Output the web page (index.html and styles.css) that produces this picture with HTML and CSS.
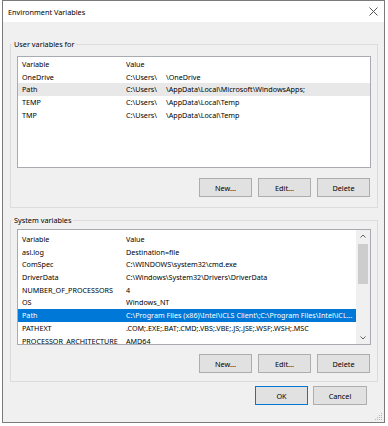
FILE: index.html
```html
<!DOCTYPE html>
<html>
<head>
<meta charset="utf-8">
<title>Environment Variables</title>
<link rel="stylesheet" href="styles.css">
</head>
<body>
<div class="window">
  <div class="titlebar">
    <span class="title">Environment Variables</span>
    <svg class="close" width="9" height="9" viewBox="0 0 9 9"><path d="M0.5 0.5 L8.5 8.5 M8.5 0.5 L0.5 8.5" stroke="#555" stroke-width="1" fill="none"/></svg>
  </div>
  <div class="content">
    <fieldset class="group user-group">
      <legend>User variables for</legend>
      <div class="list user-list">
        <div class="row head"><span class="c1">Variable</span><span class="c2">Value</span></div>
        <div class="row"><span class="c1">OneDrive</span><span class="c2">C:\Users\<span class="gap"></span>\OneDrive</span></div>
        <div class="row soft"><span class="c1">Path</span><span class="c2">C:\Users\<span class="gap"></span>\AppData\Local\Microsoft\WindowsApps;</span></div>
        <div class="row"><span class="c1">TEMP</span><span class="c2">C:\Users\<span class="gap"></span>\AppData\Local\Temp</span></div>
        <div class="row"><span class="c1">TMP</span><span class="c2">C:\Users\<span class="gap"></span>\AppData\Local\Temp</span></div>
      </div>
      <div class="buttons">
        <button class="btn">New...</button>
        <button class="btn">Edit...</button>
        <button class="btn">Delete</button>
      </div>
    </fieldset>

    <fieldset class="group sys-group">
      <legend>System variables</legend>
      <div class="list sys-list">
        <div class="rows">
          <div class="row head"><span class="c1">Variable</span><span class="c2">Value</span></div>
          <div class="row"><span class="c1">asl.log</span><span class="c2">Destination=file</span></div>
          <div class="row"><span class="c1">ComSpec</span><span class="c2">C:\WINDOWS\system32\cmd.exe</span></div>
          <div class="row"><span class="c1">DriverData</span><span class="c2">C:\Windows\System32\Drivers\DriverData</span></div>
          <div class="row"><span class="c1">NUMBER_OF_PROCESSORS</span><span class="c2">4</span></div>
          <div class="row"><span class="c1">OS</span><span class="c2">Windows_NT</span></div>
          <div class="row selected"><span class="c1">Path</span><span class="c2">C:\Program Files (x86)\Intel\iCLS Client\;C:\Program Files\Intel\iCL...</span></div>
          <div class="row"><span class="c1">PATHEXT</span><span class="c2">.COM;.EXE;.BAT;.CMD;.VBS;.VBE;.JS;.JSE;.WSF;.WSH;.MSC</span></div>
          <div class="row"><span class="c1">PROCESSOR_ARCHITECTURE</span><span class="c2">AMD64</span></div>
        </div>
        <div class="scrollbar">
          <svg class="arrow" width="14" height="12" viewBox="0 0 14 12"><path d="M4.5 7.5 L7 5 L9.5 7.5" stroke="#606060" stroke-width="1" fill="none"/></svg>
          <div class="track"><div class="thumb"></div></div>
          <svg class="arrow" width="14" height="12" viewBox="0 0 14 12"><path d="M4.5 4.5 L7 7 L9.5 4.5" stroke="#606060" stroke-width="1" fill="none"/></svg>
        </div>
      </div>
      <div class="buttons">
        <button class="btn">New...</button>
        <button class="btn">Edit...</button>
        <button class="btn">Delete</button>
      </div>
    </fieldset>

    <div class="footer">
      <button class="btn ok">OK</button>
      <button class="btn cancel">Cancel</button>
    </div>
  </div>
  <svg class="grip" width="8" height="8" viewBox="0 0 8 8">
    <rect x="6" y="0" width="1" height="1" fill="#b5b5b5"/>
    <rect x="4" y="2" width="1" height="1" fill="#b5b5b5"/>
    <rect x="6" y="2" width="1" height="1" fill="#b5b5b5"/>
    <rect x="2" y="4" width="1" height="1" fill="#b5b5b5"/>
    <rect x="4" y="4" width="1" height="1" fill="#b5b5b5"/>
    <rect x="6" y="4" width="1" height="1" fill="#b5b5b5"/>
    <rect x="0" y="6" width="1" height="1" fill="#b5b5b5"/>
    <rect x="2" y="6" width="1" height="1" fill="#b5b5b5"/>
    <rect x="4" y="6" width="1" height="1" fill="#b5b5b5"/>
    <rect x="6" y="6" width="1" height="1" fill="#b5b5b5"/>
  </svg>
</div>
</body>
</html>
```

FILE: styles.css
```css
* { box-sizing: border-box; }
html, body {
  margin: 0;
  padding: 0;
  background: #ffffff;
}
body {
  font-family: "Noto Sans", "Open Sans", "DejaVu Sans", sans-serif;
  font-size: 7.2px;
  color: #000000;
}
.window {
  position: relative;
  margin-left: 2px;
  width: 383px;
  height: 423px;
  border: 1px solid #7a7a7a;
  display: flex;
  flex-direction: column;
  background: #f0f0f0;
}
.titlebar {
  height: 21px;
  flex: none;
  background: #ffffff;
  display: flex;
  align-items: center;
  justify-content: space-between;
  padding: 0 6px 0 5px;
}
.title {
  font-size: 7.3px;
}
.close { display: block; margin-top: -1px; }
.content {
  flex: 1;
  display: flex;
  flex-direction: column;
  padding: 17px 6px 0 7px;
}
.group {
  margin: 0;
  border: 1px solid #dcdcdc;
  padding: 6px 6px 10px 6px;
  min-width: 0;
}
.group legend {
  padding: 0 2px;
  margin-left: -5px;
  line-height: 11px;
  font-size: 7.3px;
}
.sys-group {
  margin-top: 7px;
  padding-top: 3px;
  padding-bottom: 8px;
}
.list {
  background: #ffffff;
  border: 1px solid #a9abb0;
  overflow: hidden;
}
.user-list {
  height: 112px;
  padding-top: 1px;
}
.sys-list {
  height: 116px;
  display: flex;
}
.sys-list .rows {
  flex: 1;
  min-width: 0;
  padding-top: 3px;
}
.row {
  display: flex;
  height: 12.7px;
  line-height: 12.7px;
  white-space: nowrap;
}
.row .c1 {
  flex: none;
  width: 108px;
  padding-left: 4px;
  overflow: hidden;
}
.row .c2 {
  flex: 1;
  min-width: 0;
  overflow: hidden;
}
.gap {
  display: inline-block;
  width: 9px;
}
.row.soft { background: #e8e8e8; }
.row.selected {
  background: #0078d7;
  color: #ffffff;
}
.scrollbar {
  flex: none;
  width: 14px;
  background: #f0f0f0;
  display: flex;
  flex-direction: column;
}
.arrow { display: block; flex: none; }
.track {
  flex: 1;
  padding: 2px 2px;
}
.thumb {
  height: 40px;
  background: #cdcdcd;
}
.buttons {
  display: flex;
  justify-content: flex-end;
  gap: 6px;
  margin-top: 10px;
  padding-right: 1px;
}
.sys-group .buttons { margin-top: 9px; }
.btn {
  width: 53px;
  height: 19px;
  margin: 0;
  padding: 0;
  font-family: inherit;
  font-size: 7.3px;
  color: #000000;
  background: #e1e1e1;
  border: 1px solid #adadad;
  border-radius: 0;
}
.footer {
  display: flex;
  justify-content: flex-end;
  gap: 5px;
  margin-top: 4px;
  padding-right: 11px;
}
.btn.ok {
  border-color: #0078d7;
}
.btn.cancel { width: 54px; }
.grip {
  position: absolute;
  right: 1px;
  bottom: 1px;
}
```
